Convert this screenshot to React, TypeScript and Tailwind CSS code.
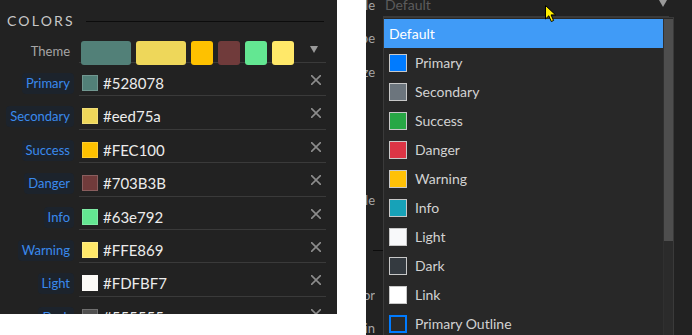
import React from "react";

const FONT = { fontFamily: "Lato, 'Noto Sans', sans-serif" };

const colorRows = [
  { label: "Primary", hex: "#528078", color: "#528078" },
  { label: "Secondary", hex: "#eed75a", color: "#eed75a" },
  { label: "Success", hex: "#FEC100", color: "#FEC100" },
  { label: "Danger", hex: "#703B3B", color: "#703B3B" },
  { label: "Info", hex: "#63e792", color: "#63e792" },
  { label: "Warning", hex: "#FFE869", color: "#FFE869" },
  { label: "Light", hex: "#FDFBF7", color: "#FDFBF7" },
  { label: "Dark", hex: "#555555", color: "#505050" },
];

const themeSwatches = [
  { c: "#528078", w: "w-[50px]" },
  { c: "#eed75a", w: "w-[50px]" },
  { c: "#FEC100", w: "w-[22px]" },
  { c: "#703B3B", w: "w-[22px]" },
  { c: "#63e792", w: "w-[22px]" },
  { c: "#FFE869", w: "w-[22px]" },
];

const menuItems: { label: string; fill: string; border: string; thick?: boolean }[] = [
  { label: "Primary", fill: "#007bff", border: "#c8c8c8" },
  { label: "Secondary", fill: "#6c757d", border: "#c8c8c8" },
  { label: "Success", fill: "#28a745", border: "#c8c8c8" },
  { label: "Danger", fill: "#dc3545", border: "#c8c8c8" },
  { label: "Warning", fill: "#ffc107", border: "#c8c8c8" },
  { label: "Info", fill: "#17a2b8", border: "#c8c8c8" },
  { label: "Light", fill: "#f8f9fa", border: "#c8c8c8" },
  { label: "Dark", fill: "#343a40", border: "#c8c8c8" },
  { label: "Link", fill: "#ffffff", border: "#c8c8c8" },
  { label: "Primary Outline", fill: "#2a2a2a", border: "#007bff", thick: true },
  { label: "Secondary Outline", fill: "#2a2a2a", border: "#6c757d", thick: true },
];

function XIcon() {
  return (
    <svg width="10" height="10" viewBox="0 0 10 10" className="block">
      <path d="M0.5 0.5 L9.5 9.5 M9.5 0.5 L0.5 9.5" stroke="#8c8c8c" strokeWidth="1.6" strokeLinecap="square" />
    </svg>
  );
}

function Caret({ color = "#9a9a9a" }: { color?: string }) {
  return (
    <svg width="8" height="7" viewBox="0 0 8 7" className="block">
      <path d="M0 0 L8 0 L4 7 Z" fill={color} />
    </svg>
  );
}

function LeftPanel() {
  return (
    <div className="w-[337px] h-[314px] shrink-0 bg-[#222222] overflow-hidden flex flex-col" style={FONT}>
      {/* header */}
      <div className="h-[33px] shrink-0 flex items-center pt-[9px]">
        <span className="ml-[7px] text-[14px] leading-[18px] tracking-[2.2px] text-[#c8c8c8]">COLORS</span>
        <div className="flex-1 ml-[11px] mr-[13px] h-px bg-[#0c0c0c]" />
      </div>
      {/* theme row */}
      <div className="h-[30px] shrink-0 flex">
        <div className="w-[74px] shrink-0 flex justify-end pr-[4px] pt-[9px]">
          <span className="text-[13px] leading-[18px] text-[#a6a6a6]">Theme</span>
        </div>
        <div className="ml-[5px] w-[247px] border-b border-[#3a3a3a] flex items-start pl-[2px]">
          <div className="flex gap-[5px] mt-[8px]">
            {themeSwatches.map((s, i) => (
              <div key={i} className={`${s.w} h-[24px] rounded-[3px]`} style={{ backgroundColor: s.c }} />
            ))}
          </div>
          <div className="ml-auto mr-[8px] mt-[13px]">
            <Caret />
          </div>
        </div>
      </div>
      {/* color rows */}
      {colorRows.map((r) => (
        <div key={r.label} className="h-[33.4px] shrink-0 flex">
          <div className="w-[74px] shrink-0 flex justify-end items-start pt-[10px]">
            <span className="h-[21px] px-[4px] rounded-[4px] bg-[#1c232c] text-[#3a8aed] text-[13px] leading-[21px]">
              {r.label}
            </span>
          </div>
          <div className="ml-[5px] w-[247px] border-b border-[#3a3a3a] flex items-start pl-[3px]">
            <div
              className="mt-[12px] w-[16px] h-[16px] border border-[rgba(255,255,255,0.18)]"
              style={{ backgroundColor: r.color }}
            />
            <span className="ml-[5px] mt-[10px] text-[15px] leading-[20px] text-[#ececec]">{r.hex}</span>
            <div className="ml-auto mr-[5px] mt-[12px]">
              <XIcon />
            </div>
          </div>
        </div>
      ))}
    </div>
  );
}

function SideLabel({ text, className }: { text: string; className: string }) {
  return (
    <div className={`w-[9px] h-[18px] flex justify-end overflow-hidden ${className}`}>
      <span className="shrink-0 whitespace-nowrap text-[13px] leading-[18px] text-[#a6a6a6]">{text}</span>
    </div>
  );
}

function RightPanel() {
  return (
    <div className="relative w-[326px] h-[335px] shrink-0 bg-[#222222] overflow-hidden" style={FONT}>
      <div className="flex flex-col">
        <div className="flex mt-[-4px]">
          <SideLabel text="Style" className="" />
          <div className="ml-[8px] w-[286px] h-[21px] border-b border-[#3a3a3a] flex items-start">
            <span className="ml-[2px] text-[14px] leading-[18px] text-[#5c5c5c]">Default</span>
            <div className="ml-auto mr-[2px] mt-[4px]">
              <Caret color="#9a9a9a" />
            </div>
          </div>
        </div>
        <SideLabel text="Type" className="mt-[12px]" />
        <SideLabel text="Size" className="mt-[16px]" />
        <SideLabel text="Style" className="mt-[110px]" />
        <div className="mt-[41px] ml-[7px] w-[40px] h-px bg-[#0c0c0c]" />
        <SideLabel text="Color" className="mt-[35px]" />
        <SideLabel text="Margin" className="mt-[15px]" />
      </div>

      {/* dropdown menu overlay */}
      <div className="absolute left-[17px] top-[17px] w-[291px] h-[330px] bg-[#282828] border border-[#3a3a3a] pt-px flex">
        <div className="flex-1 flex flex-col">
          <div className="h-[29px] shrink-0 bg-[#409bf7] flex items-center pl-[5px]">
            <span className="text-[14px] leading-[18px] text-white">Default</span>
          </div>
          {menuItems.map((m) => (
            <div key={m.label} className="h-[29px] shrink-0 flex items-center pl-[5px]">
              <div
                className={`w-[18px] h-[18px] ${m.thick ? "border-2" : "border"}`}
                style={{ backgroundColor: m.fill, borderColor: m.border }}
              />
              <span className="ml-[8px] text-[14px] leading-[18px] text-[#d2d2d2]">{m.label}</span>
            </div>
          ))}
        </div>
        <div className="w-[10px] shrink-0 bg-[#2b2b2b] border-l border-[#303030] flex flex-col">
          <div className="h-[222px] bg-[#4e4e4e]" />
        </div>
      </div>

      {/* mouse cursor */}
      <svg className="absolute left-[179px] top-[5px]" width="12" height="18" viewBox="0 0 12 18">
        <path
          d="M0.5 0.5 L0.5 14 L3.8 10.8 L6.3 16.5 L8.6 15.5 L6.1 9.9 L10.6 9.9 Z"
          fill="#ffee00"
          stroke="#000"
          strokeWidth="1"
          strokeLinejoin="miter"
        />
      </svg>
    </div>
  );
}

export default function App() {
  return (
    <div className="w-[692px] h-[335px] bg-white flex overflow-hidden">
      <LeftPanel />
      <div className="w-[29px] shrink-0" />
      <RightPanel />
    </div>
  );
}
